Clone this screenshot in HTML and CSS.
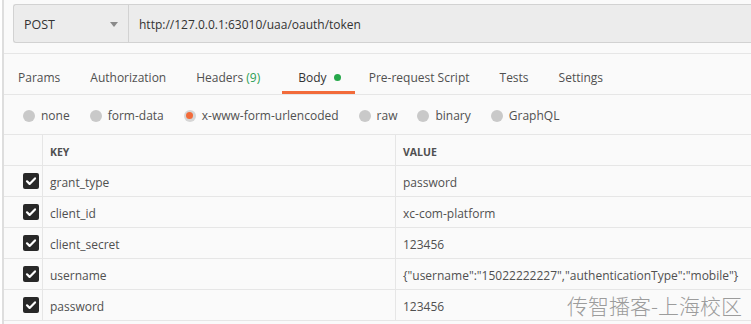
FILE: index.html
```html
<!DOCTYPE html>
<html lang="en">
<head>
  <meta charset="UTF-8">
  <title>POST token</title>
  <link rel="stylesheet" href="styles.css">
</head>
<body>
  <div class="frame">
    <!-- request line -->
    <div class="url-bar">
      <div class="url-group">
        <div class="method">
          <span>POST</span>
          <span class="caret"></span>
        </div>
        <div class="url">http://127.0.0.1:63010/uaa/oauth/token</div>
      </div>
    </div>

    <div class="tabs">
      <div class="tab">Params</div>
      <div class="tab">Authorization</div>
      <div class="tab">Headers <span class="count">(9)</span></div>
      <div class="tab active">Body <span class="dot"></span></div>
      <div class="tab">Pre-request Script</div>
      <div class="tab">Tests</div>
      <div class="tab">Settings</div>
    </div>

    <div class="body-types">
      <label class="radio"><span class="circle"></span>none</label>
      <label class="radio"><span class="circle"></span>form-data</label>
      <label class="radio"><span class="circle checked"></span>x-www-form-urlencoded</label>
      <label class="radio"><span class="circle"></span>raw</label>
      <label class="radio"><span class="circle"></span>binary</label>
      <label class="radio"><span class="circle"></span>GraphQL</label>
    </div>

    <div class="params">
      <div class="row head">
        <div class="cell check"></div>
        <div class="cell key">KEY</div>
        <div class="cell value">VALUE</div>
      </div>
      <div class="row">
        <div class="cell check"><span class="box"><svg viewBox="0 0 16 16" width="16" height="16"><path d="M4 8.3l2.6 2.6L12 5.4" fill="none" stroke="#fff" stroke-width="2.2" stroke-linecap="round" stroke-linejoin="round"/></svg></span></div>
        <div class="cell key">grant_type</div>
        <div class="cell value">password</div>
      </div>
      <div class="row">
        <div class="cell check"><span class="box"><svg viewBox="0 0 16 16" width="16" height="16"><path d="M4 8.3l2.6 2.6L12 5.4" fill="none" stroke="#fff" stroke-width="2.2" stroke-linecap="round" stroke-linejoin="round"/></svg></span></div>
        <div class="cell key">client_id</div>
        <div class="cell value">xc-com-platform</div>
      </div>
      <div class="row">
        <div class="cell check"><span class="box"><svg viewBox="0 0 16 16" width="16" height="16"><path d="M4 8.3l2.6 2.6L12 5.4" fill="none" stroke="#fff" stroke-width="2.2" stroke-linecap="round" stroke-linejoin="round"/></svg></span></div>
        <div class="cell key">client_secret</div>
        <div class="cell value">123456</div>
      </div>
      <div class="row">
        <div class="cell check"><span class="box"><svg viewBox="0 0 16 16" width="16" height="16"><path d="M4 8.3l2.6 2.6L12 5.4" fill="none" stroke="#fff" stroke-width="2.2" stroke-linecap="round" stroke-linejoin="round"/></svg></span></div>
        <div class="cell key">username</div>
        <div class="cell value">{"username":"15022222227","authenticationType":"mobile"}</div>
      </div>
      <div class="row">
        <div class="cell check"><span class="box"><svg viewBox="0 0 16 16" width="16" height="16"><path d="M4 8.3l2.6 2.6L12 5.4" fill="none" stroke="#fff" stroke-width="2.2" stroke-linecap="round" stroke-linejoin="round"/></svg></span></div>
        <div class="cell key">password</div>
        <div class="cell value">123456</div>
      </div>
    </div>

    <!-- watermark over the table -->
    <div class="watermark">传智播客-上海校区</div>
  </div>
</body>
</html>
```

FILE: styles.css
```css
* {
  margin: 0;
  padding: 0;
  box-sizing: border-box;
  font-family: 'Open Sans', 'Noto Sans', sans-serif;
}

body {
  background-color: #fff;
  width: 751px;
  height: 324px;
  overflow: hidden;
  display: flex;
  padding-left: 2px;
}

.frame {
  flex: 1;
  position: relative;
  background-color: #fafafa;
  border-left: 2px solid #dedede;
  color: #505050;
  font-size: 12px;
}

.url-bar {
  padding: 4px 0 10px 9px;
  border-bottom: 1px solid #e6e6e6;
}

.url-group {
  display: flex;
  height: 39px;
  background-color: #ececec;
  border: 1px solid #d2d2d2;
  border-right: none;
  border-radius: 3px 0 0 3px;
}

.method {
  width: 115px;
  display: flex;
  align-items: center;
  justify-content: space-between;
  padding: 1px 10px 0 10px;
  border-right: 1px solid #d2d2d2;
  color: #333;
  font-size: 12.5px;
}

.caret {
  width: 0;
  height: 0;
  border-left: 4px solid transparent;
  border-right: 4px solid transparent;
  border-top: 5px solid #8a8a8a;
}

.url {
  display: flex;
  align-items: center;
  padding: 1px 0 0 10px;
  color: #333;
  font-size: 12px;
}

.tabs {
  display: flex;
  height: 41px;
  border-bottom: 1px solid #e6e6e6;
}

.tab {
  display: flex;
  align-items: center;
  padding: 10px 16px 0 14px;
  border-bottom: 3px solid transparent;
  white-space: pre;
}

.tab.active {
  color: #333;
  border-bottom-color: #f26b3a;
  margin-left: 6px;
  padding: 10px 14px 0 16px;
}

.count {
  color: #2d9f55;
}

.dot {
  display: inline-block;
  width: 7px;
  height: 7px;
  margin-left: 4px;
  border-radius: 50%;
  background-color: #26a84a;
}

.body-types {
  display: flex;
  align-items: center;
  height: 40px;
  padding: 2px 0 0 19px;
  border-bottom: 1px solid #e6e6e6;
}

.radio {
  display: flex;
  align-items: center;
  margin-right: 20px;
}

.circle {
  width: 12px;
  height: 12px;
  border-radius: 50%;
  background-color: #c9c9c9;
  margin-right: 6px;
  display: flex;
  align-items: center;
  justify-content: center;
}

.circle.checked {
  background-color: #d6d6d6;
}

.circle.checked::after {
  content: '';
  width: 7px;
  height: 7px;
  border-radius: 50%;
  background-color: #f26b3a;
}

.row {
  display: flex;
  height: 31px;
  border-bottom: 1px solid #e6e6e6;
}

.cell {
  display: flex;
  align-items: center;
  white-space: nowrap;
  padding-top: 3px;
}

.check {
  width: 39px;
  padding: 0 0 0 19px;
  border-right: 1px solid #e6e6e6;
}

.key {
  width: 353px;
  padding-left: 7px;
  border-right: 1px solid #e6e6e6;
}

.value {
  flex: 1;
  padding-left: 7px;
}

.head .cell {
  font-size: 10.5px;
  font-weight: 700;
  color: #505050;
}

.box {
  width: 16px;
  height: 16px;
  border-radius: 2px;
  background-color: #282828;
  display: flex;
}

.watermark {
  position: absolute;
  right: 9px;
  bottom: 4px;
  font-family: 'Noto Sans CJK SC', sans-serif;
  font-weight: 300;
  font-size: 21px;
  color: #9c9c9c;
}
```
